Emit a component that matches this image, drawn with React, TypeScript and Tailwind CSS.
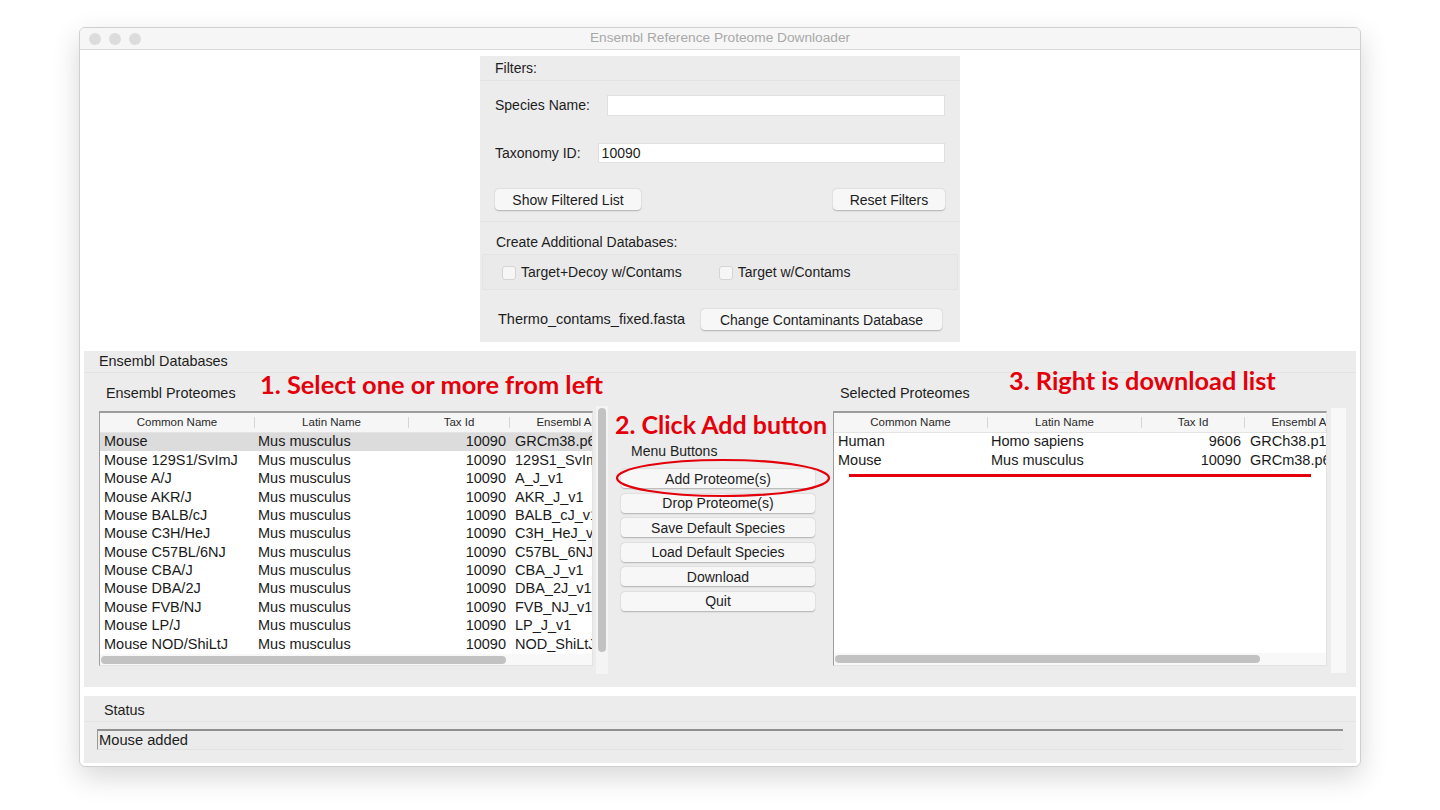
import React from 'react';

type Row = { common: string; latin: string; tax: string; ens: string };

const ensemblRows: Row[] = [
  { common: 'Mouse', latin: 'Mus musculus', tax: '10090', ens: 'GRCm38.p6' },
  { common: 'Mouse 129S1/SvImJ', latin: 'Mus musculus', tax: '10090', ens: '129S1_SvImJ_v1' },
  { common: 'Mouse A/J', latin: 'Mus musculus', tax: '10090', ens: 'A_J_v1' },
  { common: 'Mouse AKR/J', latin: 'Mus musculus', tax: '10090', ens: 'AKR_J_v1' },
  { common: 'Mouse BALB/cJ', latin: 'Mus musculus', tax: '10090', ens: 'BALB_cJ_v1' },
  { common: 'Mouse C3H/HeJ', latin: 'Mus musculus', tax: '10090', ens: 'C3H_HeJ_v1' },
  { common: 'Mouse C57BL/6NJ', latin: 'Mus musculus', tax: '10090', ens: 'C57BL_6NJ_v1' },
  { common: 'Mouse CBA/J', latin: 'Mus musculus', tax: '10090', ens: 'CBA_J_v1' },
  { common: 'Mouse DBA/2J', latin: 'Mus musculus', tax: '10090', ens: 'DBA_2J_v1' },
  { common: 'Mouse FVB/NJ', latin: 'Mus musculus', tax: '10090', ens: 'FVB_NJ_v1' },
  { common: 'Mouse LP/J', latin: 'Mus musculus', tax: '10090', ens: 'LP_J_v1' },
  { common: 'Mouse NOD/ShiLtJ', latin: 'Mus musculus', tax: '10090', ens: 'NOD_ShiLtJ_v1' },
];

const selectedRows: Row[] = [
  { common: 'Human', latin: 'Homo sapiens', tax: '9606', ens: 'GRCh38.p13' },
  { common: 'Mouse', latin: 'Mus musculus', tax: '10090', ens: 'GRCm38.p6' },
];

const menuButtons = [
  'Add Proteome(s)',
  'Drop Proteome(s)',
  'Save Default Species',
  'Load Default Species',
  'Download',
  'Quit',
];

const MacButton: React.FC<{ label: string; className?: string }> = ({ label, className = '' }) => (
  <button
    className={`h-[21px] rounded-[4px] bg-[#f7f7f7] text-[14px] leading-none text-[#1d1d1d] shadow-[0_0.5px_1.5px_rgba(0,0,0,0.25)] ${className}`}
  >
    {label}
  </button>
);

const Checkbox: React.FC<{ label: string }> = ({ label }) => (
  <label className="flex items-center gap-[5px] text-[14px]">
    <span className="w-[14px] h-[14px] rounded-[3px] bg-[#f6f6f6] border border-[#d4d4d4]" />
    {label}
  </label>
);

const ProteomeTable: React.FC<{ rows: Row[]; selected?: number; cols: number[]; thumb: number }> = ({
  rows,
  selected,
  cols,
  thumb,
}) => (
  <div className="w-[494px] h-[255px] flex flex-col border-t-2 border-l border-[#9d9d9d] border-r border-r-[#e2e2e2] border-b border-b-[#e2e2e2] bg-white overflow-hidden">
    {/* header */}
    <div className="flex h-[20px] shrink-0 bg-[#f6f6f6] border-b border-[#e4e4e4] text-[11.5px] text-[#2a2a2a]">
      {['Common Name', 'Latin Name', 'Tax Id', 'Ensembl Assembly'].map((h, i) => (
        <div
          key={h}
          style={{ width: cols[i] }}
          className={`shrink-0 flex items-center justify-center whitespace-nowrap overflow-hidden ${
            i < 3 ? 'border-r border-[#d6d6d6] my-[4px]' : ''
          }`}
        >
          {h}
        </div>
      ))}
    </div>
    {/* rows */}
    <div className="flex-1 text-[14.5px] text-[#1a1a1a]">
      {rows.map((r, idx) => (
        <div
          key={r.common + idx}
          className={`flex h-[18.4px] items-center whitespace-nowrap ${idx === selected ? 'bg-[#dcdcdc]' : ''}`}
        >
          <div style={{ width: cols[0] }} className="shrink-0 pl-[4px] overflow-hidden">
            {r.common}
          </div>
          <div style={{ width: cols[1] }} className="shrink-0 pl-[3px] overflow-hidden">
            {r.latin}
          </div>
          <div style={{ width: cols[2] }} className="shrink-0 pr-[4px] text-right overflow-hidden">
            {r.tax}
          </div>
          <div style={{ width: cols[3] }} className="shrink-0 pl-[5px] overflow-hidden">
            {r.ens}
          </div>
        </div>
      ))}
    </div>
    {/* horizontal scrollbar */}
    <div className="h-[12px] shrink-0 bg-[#f8f8f8] flex items-center px-[1px]">
      <div style={{ width: thumb }} className="h-[8px] rounded-full bg-[#c2c2c2]" />
    </div>
  </div>
);

export default function App() {
  return (
    <div className="min-h-[810px] bg-white pt-[27px] font-['Liberation_Sans',Arial,sans-serif] text-[#1d1d1d]">
      <div className="relative mx-[79px] h-[740px] rounded-[6px] border border-[#cfcfcf] bg-white shadow-[0_10px_28px_rgba(0,0,0,0.16)] overflow-hidden flex flex-col">
        {/* title bar */}
        <div className="h-[22px] shrink-0 bg-[#f6f6f6] border-b border-[#dadada] grid grid-cols-[1fr_auto_1fr] items-center">
          <div className="flex items-center gap-[8px] pl-[9px]">
            <span className="w-[12px] h-[12px] rounded-full bg-[#dcdcdc]" />
            <span className="w-[12px] h-[12px] rounded-full bg-[#dcdcdc]" />
            <span className="w-[12px] h-[12px] rounded-full bg-[#dcdcdc]" />
          </div>
          <div className="text-[13.7px] text-[#a9a9a9]">Ensembl Reference Proteome Downloader</div>
          <div />
        </div>

        {/* Filters panel */}
        <div className="mt-[6px] mx-auto w-[480px] h-[286px] bg-[#ececec] flex flex-col text-[14px]">
          <div className="h-[25px] pl-[15px] flex items-center border-b border-[#e3e3e3]">Filters:</div>
          <div className="mt-[14px] h-[21px] px-[15px] flex items-center gap-[17px]">
            <span>Species Name:</span>
            <div className="flex-1 h-[21px] bg-white border border-[#e0e0e0]" />
          </div>
          <div className="mt-[27px] h-[20px] px-[15px] flex items-center gap-[17px]">
            <span>Taxonomy ID:</span>
            <div className="flex-1 h-[20px] bg-white border border-[#e0e0e0] pl-[3px] flex items-center">10090</div>
          </div>
          <div className="mt-[26px] px-[15px] flex justify-between">
            <MacButton label="Show Filtered List" className="w-[146px]" />
            <MacButton label="Reset Filters" className="w-[112px]" />
          </div>
          <div className="mt-[11px] border-b border-[#e3e3e3]" />
          <div className="h-[32px] pt-[8px] pl-[16px] flex items-center">Create Additional Databases:</div>
          <div className="mx-[2px] h-[36px] bg-[#eaeaea] border border-[#e3e3e3] rounded-[2px] flex items-center pt-[1px] pl-[19px] gap-[37px]">
            <Checkbox label="Target+Decoy w/Contams" />
            <Checkbox label="Target w/Contams" />
          </div>
          <div className="mt-[19px] pl-[18px] pr-[18px] flex items-center">
            <span className="text-[14.5px]">Thermo_contams_fixed.fasta</span>
            <MacButton label="Change Contaminants Database" className="ml-auto w-[241px] text-[14.3px]" />
          </div>
        </div>

        {/* Ensembl Databases frame */}
        <div className="mt-[9px] mx-[4px] h-[336px] bg-[#ececec] flex flex-col">
          <div className="h-[22px] pl-[15px] flex items-center text-[14.4px] border-b border-[#e3e3e3]">
            Ensembl Databases
          </div>
          <div className="flex pl-[15px]">
            {/* left */}
            <div className="w-[509px] flex flex-col">
              <div className="mt-[12px] h-[18px] pl-[7px] flex items-center text-[14.4px]">Ensembl Proteomes</div>
              <div className="mt-[8px] flex gap-[3px]">
                <ProteomeTable rows={ensemblRows} selected={0} cols={[155, 154, 101, 150]} thumb={405} />
                <div className="-mt-[5px] w-[12px] h-[268px] bg-[#f4f4f4] flex justify-center pt-[2px]">
                  <div className="w-[8px] h-[244px] rounded-full bg-[#c2c2c2]" />
                </div>
              </div>
            </div>
            {/* middle */}
            <div className="ml-[5px] w-[220px] flex flex-col pl-[8px]">
              <div className="mt-[69px] h-[18px] pl-[10px] flex items-center text-[14px]">Menu Buttons</div>
              <div className="mt-[9px] flex flex-col gap-[5.6px]">
                {menuButtons.map((b) => (
                  <MacButton key={b} label={b} className="w-[194px] !h-[19px]" />
                ))}
              </div>
            </div>
            {/* right */}
            <div className="flex flex-col">
              <div className="mt-[12px] h-[18px] pl-[7px] flex items-center text-[14.4px]">Selected Proteomes</div>
              <div className="mt-[8px] flex gap-[4px]">
                <ProteomeTable rows={selectedRows} cols={[154, 154, 103, 150]} thumb={425} />
                <div className="-mt-[3px] w-[15px] h-[265px] bg-[#f8f8f8]" />
              </div>
            </div>
          </div>
        </div>

        {/* Status frame */}
        <div className="mt-[9px] mx-[4px] h-[67px] bg-[#ececec] flex flex-col">
          <div className="h-[26px] pt-[4px] pl-[20px] flex items-center text-[14.4px] border-b border-[#e4e4e4]">
            Status
          </div>
          <div className="mt-[7px] mx-[13px] h-[21px] bg-[#ebebeb] border-t-2 border-t-[#8f8f8f] border-l border-l-[#9a9a9a] border-b border-b-[#e2e2e2] pl-[1px] flex items-center text-[14.7px]">
            Mouse added
          </div>
        </div>

        {/* annotations */}
        <div className="absolute left-[180px] top-[341px] leading-[30px] text-[25.4px] font-bold text-[#e3000b] font-['Lato',sans-serif] whitespace-nowrap">
          1. Select one or more from left
        </div>
        <div className="absolute left-[535px] top-[381px] leading-[30px] text-[25px] font-bold text-[#e3000b] font-['Lato',sans-serif] whitespace-nowrap">
          2. Click Add button
        </div>
        <div className="absolute left-[929px] top-[337px] leading-[30px] text-[25.3px] font-bold text-[#e3000b] font-['Lato',sans-serif] whitespace-nowrap">
          3. Right is download list
        </div>
        <svg className="absolute left-[535px] top-[430px]" width="216" height="40" viewBox="0 0 216 40">
          <ellipse cx="108" cy="20" rx="106" ry="18" fill="none" stroke="#e3000b" strokeWidth="2.2" />
        </svg>
        <div className="absolute left-[769px] top-[446px] w-[462px] h-[3px] bg-[#e3000b]" />
      </div>
    </div>
  );
}
